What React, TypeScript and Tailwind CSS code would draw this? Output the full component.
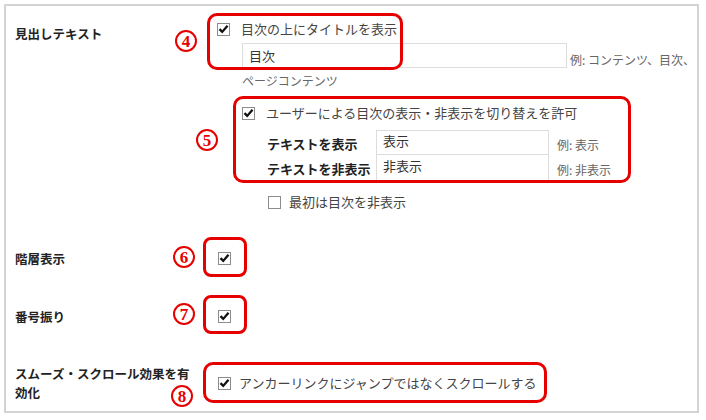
import React from "react";

const jp = "font-['Noto_Sans_CJK_JP','Noto_Sans',sans-serif]";

function Check({ checked = true }: { checked?: boolean }) {
  return (
    <span className="inline-flex h-[13px] w-[13px] shrink-0 items-center justify-center border border-[#8c8c8c] bg-white">
      {checked && (
        <svg viewBox="0 0 12 12" className="h-[12px] w-[12px]">
          <path d="M1.6 6.2 L4.6 9.2 L10.4 2.4" fill="none" stroke="#111" strokeWidth="2.5" />
        </svg>
      )}
    </span>
  );
}

function Mark({ n, className }: { n: string; className: string }) {
  return (
    <span
      className={`absolute flex h-[22px] w-[22px] items-center justify-center rounded-full border-[2.5px] border-[#e60000] font-['Liberation_Serif',serif] text-[17px] font-bold leading-none text-[#e60000] ${className}`}
    >
      {n}
    </span>
  );
}

function Label({ children }: { children: React.ReactNode }) {
  return (
    <div className="w-[211px] shrink-0 pl-[9px] text-[12.5px] font-bold leading-[19px] text-[#222]">
      {children}
    </div>
  );
}

export default function App() {
  return (
    <div className={`min-h-[420px] bg-white pt-[4px] pl-[4px] ${jp}`}>
      <div className="relative h-[409px] w-[695px] border-2 border-[#d3d3d3] bg-white text-[13px] text-[#444]">
        {/* 見出しテキスト */}
        <div className="flex pb-[26px]">
          <div className="pt-[18px]">
            <Label>見出しテキスト</Label>
          </div>
          <div className="flex flex-col">
            <div className="mt-[13px] flex h-[20px] items-center gap-[11px]">
              <Check />
              <span>目次の上にタイトルを表示</span>
            </div>
            <div className="mt-[4px] ml-[25px] flex items-end gap-[3px]">
              <div className="flex h-[25px] w-[325px] items-center border border-[#dddddd] px-[6px] text-[#333]">目次</div>
              <span className="text-[12px] leading-[16px] text-[#666]">例: コンテンツ、目次、</span>
            </div>
            <div className="mt-[5px] ml-[25px] text-[12px] leading-[16px] text-[#666]">ページコンテンツ</div>

            <div className="mt-[14px] ml-[25px] flex h-[20px] items-center gap-[11px]">
              <Check />
              <span>ユーザーによる目次の表示・非表示を切り替えを許可</span>
            </div>
            <div className="mt-[7px] ml-[50px] flex flex-col">
              <div className="flex h-[25px] items-center">
                <span className="w-[109px] pt-[2px] font-bold text-[#222]">テキストを表示</span>
                <div className="flex h-[25px] w-[173px] items-center border border-[#dddddd] px-[6px] pb-[3px] text-[#333]">表示</div>
                <span className="ml-[8px] pt-[4px] text-[12px] text-[#666]">例: 表示</span>
              </div>
              <div className="flex h-[26px] items-center">
                <span className="w-[109px] pt-[1px] font-bold text-[#222]">テキストを非表示</span>
                <div className="flex h-[26px] w-[173px] items-center border border-t-0 border-[#dddddd] px-[6px] pb-[3px] text-[#333]">非表示</div>
                <span className="ml-[8px] pt-[4px] text-[12px] text-[#666]">例: 非表示</span>
              </div>
            </div>
            <div className="mt-[11px] ml-[51px] flex h-[20px] items-center gap-[8px]">
              <Check checked={false} />
              <span>最初は目次を非表示</span>
            </div>
          </div>
        </div>

        {/* 階層表示 */}
        <div className="flex h-[40px] items-center">
          <Label>階層表示</Label>
          <div className="ml-[1px] flex">
            <Check />
          </div>
        </div>

        {/* 番号振り */}
        <div className="mt-[18px] flex h-[40px] items-center">
          <Label>番号振り</Label>
          <div className="ml-[1px] flex">
            <Check />
          </div>
        </div>

        {/* スムーズスクロール */}
        <div className="mt-[27px] flex h-[40px] items-center">
          <Label>
            スムーズ・スクロール効果を有
            <br />
            効化
          </Label>
          <div className="ml-[1px] flex items-center gap-[8px]">
            <Check />
            <span>アンカーリンクにジャンプではなくスクロールする</span>
          </div>
        </div>

        {/* annotations */}
        <div className="absolute left-[201px] top-[7px] h-[57px] w-[196px] rounded-[10px] border-[3px] border-[#e60000]" />
        <div className="absolute left-[227px] top-[90px] h-[87px] w-[398px] rounded-[10px] border-[3px] border-[#e60000]" />
        <div className="absolute left-[197px] top-[231px] h-[40px] w-[44px] rounded-[8px] border-[3px] border-[#e60000]" />
        <div className="absolute left-[197px] top-[289px] h-[39px] w-[44px] rounded-[8px] border-[3px] border-[#e60000]" />
        <div className="absolute left-[197px] top-[356px] h-[41px] w-[344px] rounded-[10px] border-[3px] border-[#e60000]" />

        <Mark n="4" className="left-[169px] top-[24px]" />
        <Mark n="5" className="left-[190px] top-[123px]" />
        <Mark n="6" className="left-[167px] top-[240px]" />
        <Mark n="7" className="left-[167px] top-[297px]" />
        <Mark n="8" className="left-[165px] top-[379px]" />
      </div>
    </div>
  );
}
